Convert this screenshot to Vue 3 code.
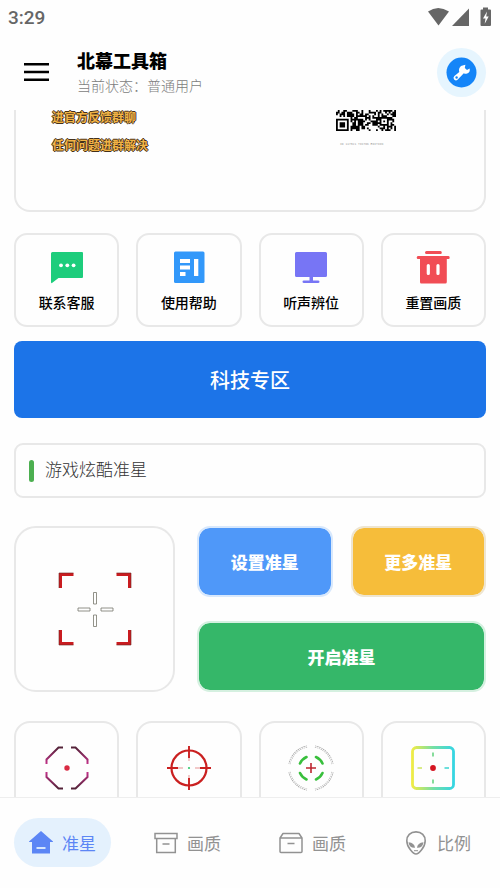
<script setup>
import { ref } from 'vue'

const tools = [
  { id: 'chat', label: '联系客服' },
  { id: 'help', label: '使用帮助' },
  { id: 'screen', label: '听声辨位' },
  { id: 'reset', label: '重置画质' },
]
const sights = ['octagon', 'scope', 'rings', 'square']
const tabs = [
  { id: 'home', label: '准星' },
  { id: 'archive', label: '画质' },
  { id: 'box', label: '画质' },
  { id: 'alien', label: '比例' },
]
const active = ref('home')

const COLS = 33
const ROWS = 12
function square(x, y, left, top, size) {
  const dx = x - left
  const dy = y - top
  if (dx < 0 || dy < 0 || dx >= size || dy >= size) return null
  const ring = Math.min(dx, dy, size - 1 - dx, size - 1 - dy)
  return ring !== 1
}
function buildCode() {
  let seed = 7321
  let d = ''
  for (let y = 0; y < ROWS; y++) {
    for (let x = 0; x < COLS; x++) {
      seed = (seed * 1103515245 + 12345) % 2147483648
      let on = seed / 2147483648 > 0.45
      if (x < 8 && y > 3) on = false
      const finder = square(x, y, 0, 5, 7)
      const align = square(x, y, 24, 4, 5)
      if (finder !== null) on = finder
      if (align !== null) on = align
      if (on) d += `M${x} ${y}h1v1h-1z`
    }
  }
  return d
}
const code = buildCode()
</script>

<template>
  <div class="app">
    <div class="status">
      <span>3:29</span>
      <svg class="status-icons" viewBox="0 0 64 20" aria-hidden="true">
        <path d="M0 4.500Q10 -2.500 21 4.500L10.500 18.500z" />
        <path d="M41 1.500V19H24z" />
        <path d="M55 0.500h5v2h2q1 0 1 1V18q0 1-1 1h-8.500q-1 0-1-1V3.500q0-1 1-1H55z" />
        <path class="bolt" d="M59 4.500l-4 7h2.500l-.8 5.200 4-7.200h-2.500z" />
      </svg>
    </div>

    <header class="header">
      <button class="menu" aria-label="菜单">
        <svg viewBox="0 0 25 18"><path d="M0 1.300h25M0 9h25M0 16.700h25" /></svg>
      </button>
      <div class="heading">
        <h1>北幕工具箱</h1>
        <p>当前状态：普通用户</p>
      </div>
      <button class="wrench" aria-label="设置">
        <svg viewBox="0 0 49 49">
          <circle cx="24.500" cy="24.500" r="15" fill="#1485f8" />
          <path d="M26.500 17.300l1.900-.5-.6 3.300 2.200 2 2.600-1.600.2 1.600q-.2 3.300-3.500 3.700-1.500.1-2.500-.5l-6 6.100q-2 1.900-3.700.2-1.400-1.700.3-3.500l4.900-4.200q-.8-1.900.1-4 1.100-2.400 4.100-2.600z" fill="#fff" />
          <circle cx="19.600" cy="29.500" r="1.200" fill="#1485f8" />
        </svg>
      </button>
    </header>

    <main class="content">
      <section class="notice">
        <div class="notice-text">
          <p>进官方反馈群聊</p>
          <p>任何问题进群解决</p>
        </div>
        <div class="qr">
          <svg viewBox="0 0 33 12" preserveAspectRatio="none"><path :d="code" /></svg>
          <small>ID 117321 TIKTOK EDITION</small>
        </div>
      </section>

      <section class="cards tools">
        <button v-for="t in tools" :key="t.id" class="card tool">
          <svg v-if="t.id === 'chat'" viewBox="0 0 34 34">
            <path d="M2.500 1H32q1 0 1 1V26q0 1-1 1H8.500L2 32q-1 .5-1-1V2.500Q1 1 2.500 1z" fill="#1dcd7c" />
            <g fill="#fff"><circle cx="11" cy="14.300" r="1.900" /><circle cx="17.300" cy="14.300" r="1.900" /><circle cx="23.600" cy="14.300" r="1.900" /></g>
          </svg>
          <svg v-else-if="t.id === 'help'" viewBox="0 0 34 34">
            <rect x="2" y="0.500" width="30.500" height="31.500" rx="1.500" fill="#3298fa" />
            <path d="M8 8h10v4H8zM8 14.500h10v4H8zM8 21h5.500v4H8zM22 8h4.300v17H22z" fill="#fff" />
          </svg>
          <svg v-else-if="t.id === 'screen'" viewBox="0 0 34 34">
            <path d="M2.500 1h29q1.500 0 1.500 1.500v22q0 1.500-1.500 1.500H19v3.500h5q1.500 0 1.500 1.200T24 32H10q-1.500 0-1.500-1.300T10 29.500h5.500V26h-13Q1 26 1 24.500v-22Q1 1 2.500 1z" fill="#7775f5" />
          </svg>
          <svg v-else viewBox="0 0 34 34">
            <path d="M10.500 0h14q1.300 0 1.300 1.500T24.500 3h-14Q9 3 9 1.500T10.500 0zM2 5h30.500q1.200 0 1.200 1.500T32.500 8h-1.700v23q0 1.500-1.500 1.500h-24Q4 32.500 4 31V8H2Q.7 8 .7 6.500T2 5z" fill="#f14d55" />
            <path d="M12.300 14.500v8M22 14.500v8" stroke="#fff" stroke-width="3.200" stroke-linecap="round" />
          </svg>
          <span>{{ t.label }}</span>
        </button>
      </section>

      <button class="zone">科技专区</button>

      <h2 class="section-title">游戏炫酷准星</h2>

      <section class="panel">
        <div class="preview">
          <svg viewBox="0 0 74 74" fill="none">
            <path d="M15.500 2.500H2.500V16M58.500 2.500h13V16M15.500 71.500H2.500V58M58.500 71.500h13V58" stroke="#c91c20" stroke-width="3" />
            <path d="M15.500 1H1V16M58.500 1H73V16M15.500 73H1V58M58.500 73H73V58" stroke="#6d2522" stroke-width="0.600" />
            <path d="M35.500 20.500h3V32h-3zM35.500 43h3v11.500h-3zM20 36h12v3H20zM43 36h12v3H43z" stroke="#77776c" stroke-width="0.800" />
          </svg>
        </div>
        <div class="actions">
          <button class="action blue">设置准星</button>
          <button class="action yellow">更多准星</button>
          <button class="action green">开启准星</button>
        </div>
      </section>

      <section class="cards sights">
        <button v-for="s in sights" :key="s" class="card sight" aria-label="准星">
          <svg v-if="s === 'octagon'" viewBox="0 0 46 46" fill="none">
            <defs>
              <linearGradient id="plum" x2="0" y2="1">
                <stop offset="0" stop-color="#532338" /><stop offset="0.400" stop-color="#c23189" />
                <stop offset="0.600" stop-color="#c23189" /><stop offset="1" stop-color="#532338" />
              </linearGradient>
            </defs>
            <path d="M19 2.500h-4.500L2.500 14.500V19M27 2.500h4.500L43.500 14.500V19M2.500 27v5L14.500 43.500H19M43.500 27v5L31.500 43.500H27" stroke="url(#plum)" stroke-width="2" />
            <circle cx="23" cy="23" r="2.700" fill="#d92b43" />
          </svg>
          <svg v-else-if="s === 'scope'" viewBox="0 0 46 46" fill="none" stroke="#ca2020">
            <circle cx="23" cy="23" r="17.500" stroke-width="2.200" />
            <path d="M23 1v12M23 33v12M1 23h11M34 23h11" stroke-width="1.900" />
            <path d="M11 23h6M29 23h6M23 11v5M23 30v5" stroke-width="0.800" opacity="0.600" />
            <circle cx="23" cy="23" r="1.100" fill="#32c96e" stroke="none" />
          </svg>
          <svg v-else-if="s === 'rings'" viewBox="0 0 46 46" fill="none">
            <path d="M19 1.500A22 22 0 0 0 1.500 19M27 1.500A22 22 0 0 1 44.500 19M1.500 27A22 22 0 0 0 19 44.500M44.500 27A22 22 0 0 1 27 44.500" stroke="#a0a0a0" stroke-width="1.900" stroke-dasharray="1.500 0.600" />
            <path d="M19 1.500A22 22 0 0 0 1.500 19M27 1.500A22 22 0 0 1 44.500 19M1.500 27A22 22 0 0 0 19 44.500M44.500 27A22 22 0 0 1 27 44.500" stroke="#fff" stroke-width="0.900" />
            <path d="M18.500 12A13 13 0 0 0 12 18.500M28 12a13 13 0 0 1 6.500 6.500M12 28a13 13 0 0 0 6.500 6.500M34.500 28a13 13 0 0 1-6.500 6.500" stroke="#38bf3c" stroke-width="2.600" stroke-linecap="round" />
            <path d="M23 18v10M18 23h10" stroke="#bd2630" stroke-width="1.600" />
          </svg>
          <svg v-else viewBox="0 0 46 46" fill="none">
            <defs>
              <linearGradient id="spectrum" gradientUnits="userSpaceOnUse" x1="2" y1="0" x2="44" y2="0">
                <stop offset="0" stop-color="#f1ec45" /><stop offset="0.500" stop-color="#75dfa4" /><stop offset="1" stop-color="#35d5e3" />
              </linearGradient>
            </defs>
            <rect x="2.500" y="2.500" width="41" height="41" rx="4" stroke="url(#spectrum)" stroke-width="2.800" />
            <path d="M23 7.500v4M23 34.500v4" stroke="#86dc9b" stroke-width="2" />
            <path d="M7.500 22.200h4.500v1.600H7.500z" fill="#d1e76b" /><path d="M34.500 22.200H39v1.600h-4.500z" fill="#48d7d4" />
            <circle cx="23" cy="23" r="2.900" fill="#d51521" />
          </svg>
        </button>
      </section>
    </main>

    <nav class="nav">
      <button v-for="t in tabs" :key="t.id" class="tab" :class="{ active: active === t.id }" @click="active = t.id">
        <svg v-if="t.id === 'home'" viewBox="0 0 24 24">
          <path d="M12 0L24.500 11H21v11.500H3V11H-.5z" fill="currentColor" /><path d="M7.500 17h9" stroke="#e4f1fd" stroke-width="1.800" />
        </svg>
        <svg v-else-if="t.id === 'archive'" viewBox="0 0 24 24" fill="none" stroke="currentColor" stroke-width="1.500">
          <path d="M1 2.500h22v5H1zM2.700 7.500v14h18.600v-14M8.500 13h7" />
        </svg>
        <svg v-else-if="t.id === 'box'" viewBox="0 0 24 24" fill="none" stroke="currentColor" stroke-width="1.500" stroke-linejoin="round">
          <path d="M1 7L4 2.500h16L23 7v13.500q0 1-1 1H2q-1 0-1-1zM1 7h22M8.500 12.500h7" />
        </svg>
        <svg v-else viewBox="0 0 24 24">
          <path d="M12 .9C6.300.9 2.800 4.700 2.800 9.700c0 6.500 6.500 13.300 9.200 13.300s9.200-6.800 9.200-13.300c0-5-3.500-8.800-9.200-8.800z" fill="none" stroke="currentColor" stroke-width="1.600" />
          <path d="M4.500 11.200q6 .5 6.500 5.500-5.500.5-6.500-5.500zM19.500 11.200q-6 .5-6.500 5.500 5.500.5 6.500-5.500z" fill="currentColor" />
          <path d="M10 19.700h4" stroke="currentColor" stroke-width="1" />
        </svg>
        <span>{{ t.label }}</span>
      </button>
    </nav>
  </div>
</template>

<style>
body {
  margin: 0;
  background: #fefefe;
}
</style>

<style scoped>
.app {
  display: flex;
  flex-direction: column;
  height: 100vh;
  background: #fefefe;
  color: #000;
  font-family: Roboto, "Noto Sans CJK SC", sans-serif;
}
button {
  margin: 0;
  padding: 0;
  border: 0;
  background: none;
  color: inherit;
  font: inherit;
  cursor: pointer;
}
svg {
  display: block;
}
h1, h2, p {
  margin: 0;
}
.status {
  display: flex;
  flex: none;
  align-items: center;
  justify-content: space-between;
  height: 34px;
  padding: 0 8px;
  color: #666;
  font-size: 19px;
  font-weight: 500;
}
.status-icons {
  width: 64px;
  height: 20px;
  fill: #666;
}
.status-icons .bolt {
  fill: #fff;
}
.header {
  display: flex;
  flex: none;
  align-items: center;
  height: 76px;
  padding: 0 14px 0 24px;
}
.menu svg {
  width: 25px;
  height: 18px;
  stroke: #000;
  stroke-width: 2.6;
}
.heading {
  flex: 1;
  padding-left: 28px;
}
h1 {
  font-size: 18px;
  font-weight: 900;
  line-height: 28px;
}
.heading p {
  color: #7c7c7c;
  font-size: 14px;
  font-weight: 300;
  line-height: 20px;
}
.wrench {
  border-radius: 50%;
  background: #e6f5fe;
}
.wrench svg {
  width: 49px;
  height: 49px;
}
.content {
  flex: 1;
  min-height: 0;
  padding: 0 14px;
  overflow-y: auto;
  scrollbar-width: none;
}
.notice {
  display: grid;
  grid-template-columns: 1fr 148px;
  padding: 0 0 56px 36px;
  border: 2px solid #e8e8e8;
  border-top: 0;
  border-radius: 0 0 16px 16px;
}
.notice-text {
  display: grid;
  gap: 12px;
  height: 44px;
  color: #f2b446;
  font-size: 12px;
  font-weight: 700;
  line-height: 16px;
  text-shadow: 1px 0 #43301a, -1px 0 #43301a, 0 1px #43301a, 0 -1px #43301a;
}
.qr svg {
  width: 60px;
  height: 21px;
}
.qr small {
  display: block;
  padding: 10px 4px 0;
  color: #999;
  font-family: "Liberation Mono", monospace;
  font-size: 3px;
  line-height: 8px;
}
.cards {
  display: grid;
  grid-template-columns: repeat(4, 1fr);
  gap: 17px;
}
.card {
  display: flex;
  flex-direction: column;
  align-items: center;
  border: 2px solid #e8e8e8;
  border-radius: 13px;
}
.tools {
  margin: 21px 0 14px;
}
.tool {
  gap: 8px;
  padding: 16px 0 11px;
  font-size: 14px;
  font-weight: 500;
  line-height: 21px;
}
.tool svg {
  width: 34px;
  height: 34px;
}
.zone {
  display: block;
  width: 100%;
  height: 77px;
  border-radius: 8px;
  background: #1c74e8;
  color: #fff;
  font-size: 20px;
  font-weight: 500;
}
.section-title {
  display: flex;
  align-items: center;
  gap: 11px;
  margin: 25px 0 28px;
  padding: 14px 13px;
  border: 2px solid #e8e8e8;
  border-radius: 9px;
  color: #333;
  font-size: 17px;
  font-weight: 300;
  line-height: 23px;
}
.section-title::before {
  width: 5px;
  height: 22px;
  border-radius: 3px;
  background: #4caf50;
  content: "";
}
.panel {
  display: grid;
  grid-template-columns: 161fr 289fr;
  gap: 22px;
}
.preview {
  display: grid;
  place-items: center;
  border: 2px solid #e8e8e8;
  border-radius: 22px;
}
.preview svg {
  width: 74px;
  height: 74px;
}
.actions {
  display: grid;
  grid-template-columns: 1fr 1fr;
  gap: 24px 18px;
}
.action {
  height: 71px;
  border: 2px solid;
  border-radius: 13px;
  color: #fff;
  font-size: 17px;
  font-weight: 900;
}
.blue {
  border-color: #d8e8fc;
  background: #4f98f9;
  background-clip: padding-box;
}
.yellow {
  border-color: #eee5d0;
  background: #f6bd3a;
  background-clip: padding-box;
}
.green {
  grid-column: 1 / -1;
  border-color: #d5f0e0;
  background: #35b769;
  background-clip: padding-box;
}
.sights {
  margin-top: 29px;
}
.sight {
  padding: 22px 0 24px;
  border-radius: 16px;
}
.sight svg {
  width: 46px;
  height: 46px;
}
.nav {
  display: grid;
  flex: none;
  grid-template-columns: repeat(4, 1fr);
  justify-items: center;
  padding: 20px 0 21px;
  border-top: 1px solid #eee;
}
.tab {
  display: flex;
  align-items: center;
  gap: 9px;
  height: 49px;
  padding: 0 15px;
  border-radius: 25px;
  color: #929292;
  font-size: 17px;
}
.tab svg {
  width: 24px;
  height: 24px;
}
.tab.active {
  background: #e4f1fd;
  color: #5c86f5;
}
</style>
